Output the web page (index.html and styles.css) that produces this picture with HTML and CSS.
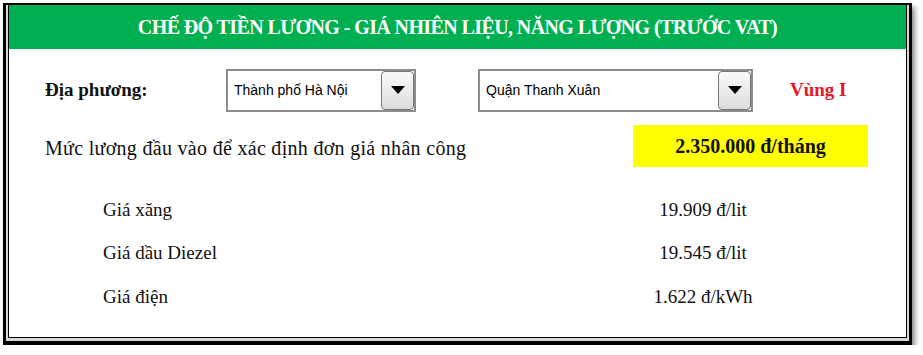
FILE: index.html
```html
<!DOCTYPE html>
<html>

<head>
    <title>Chế độ tiền lương - Giá nhiên liệu, năng lượng</title>
    <meta charset="utf-8">
    <link rel="stylesheet" href="styles.css">
</head>

<body>
    <div class="frame">
        <div class="panel">
            <h1 class="title">CHẾ ĐỘ TIỀN LƯƠNG - GIÁ NHIÊN LIỆU, NĂNG LƯỢNG (TRƯỚC VAT)</h1>

            <div class="region-row">
                <div class="label-bold">Địa phương:</div>
                <div class="select select-city">
                    <span class="select-text">Thành phố Hà Nội</span>
                    <span class="select-btn">
                        <svg width="14" height="10" viewBox="0 0 14 10"><polygon points="0,1 14,1 7,9" fill="#000"/></svg>
                    </span>
                </div>
                <div class="select select-district">
                    <span class="select-text">Quận Thanh Xuân</span>
                    <span class="select-btn">
                        <svg width="14" height="10" viewBox="0 0 14 10"><polygon points="0,1 14,1 7,9" fill="#000"/></svg>
                    </span>
                </div>
                <div class="zone">Vùng I</div>
            </div>

            <div class="wage-row">
                <div class="wage-label">Mức lương đầu vào để xác định đơn giá nhân công</div>
                <div class="wage-value">2.350.000 đ/tháng</div>
            </div>

            <div class="prices">
                <div class="price-label">Giá xăng</div>
                <div class="price-value">19.909 đ/lit</div>
                <div class="price-label">Giá dầu Diezel</div>
                <div class="price-value">19.545 đ/lit</div>
                <div class="price-label">Giá điện</div>
                <div class="price-value">1.622 đ/kWh</div>
            </div>
        </div>
    </div>
</body>

</html>
```

FILE: styles.css
```css
body {
    margin: 0;
    background: #fff;
    font-family: 'Liberation Serif', 'Times New Roman', serif;
    color: #111;
}

.frame {
    box-sizing: border-box;
    width: 909px;
    height: 342px;
    margin: 3px 0 0 3px;
    border: 3px solid #000;
    border-top-width: 2px;
    border-bottom-width: 4px;
    padding: 0 2px 3px 2px;
    background: #d8d8d8;
    box-shadow: 3px 4px 5px rgba(0, 0, 0, 0.45);
}

.panel {
    box-sizing: border-box;
    height: 100%;
    background: #fff;
    border: 1px solid #000;
    border-top: none;
}

.title {
    margin: 0;
    height: 44px;
    line-height: 44px;
    background: #00b050;
    color: #fff;
    font-size: 20px;
    font-weight: bold;
    text-align: center;
    letter-spacing: -0.6px;
    white-space: nowrap;
}

.region-row {
    display: flex;
    align-items: center;
    height: 44px;
    margin-top: 19px;
    padding-left: 36px;
}

.label-bold {
    width: 181px;
    font-size: 19px;
    font-weight: bold;
}

.select {
    box-sizing: border-box;
    display: flex;
    align-items: center;
    justify-content: space-between;
    height: 43px;
    border: 2px solid #8c8c8c;
    background: #fff;
    font-family: 'Liberation Sans', Arial, sans-serif;
    font-size: 14px;
    color: #000;
}

.select-city {
    width: 190px;
}

.select-district {
    width: 275px;
    margin-left: 62px;
}

.select-text {
    padding-left: 6px;
}

.select-btn {
    box-sizing: border-box;
    display: flex;
    align-items: center;
    justify-content: center;
    width: 33px;
    height: 39px;
    border: 1px solid #777;
    border-radius: 4px;
    background: linear-gradient(#fafafa, #dcdcdc);
}

.zone {
    margin-left: 37px;
    color: #e3192b;
    font-size: 19px;
    font-weight: bold;
}

.wage-row {
    display: flex;
    align-items: center;
    justify-content: space-between;
    height: 42px;
    margin-top: 13px;
    padding: 0 38px 0 36px;
}

.wage-label {
    font-size: 20px;
    letter-spacing: 0.3px;
    padding-top: 4px;
}

.wage-value {
    width: 235px;
    height: 42px;
    line-height: 42px;
    background: #ffff00;
    text-align: center;
    font-size: 20px;
    font-weight: bold;
}

.prices {
    display: grid;
    grid-template-columns: 500px 200px;
    grid-auto-rows: 43.5px;
    align-items: center;
    margin-top: 21px;
    padding-left: 94px;
    font-size: 19px;
}

.price-value {
    text-align: center;
}
```
